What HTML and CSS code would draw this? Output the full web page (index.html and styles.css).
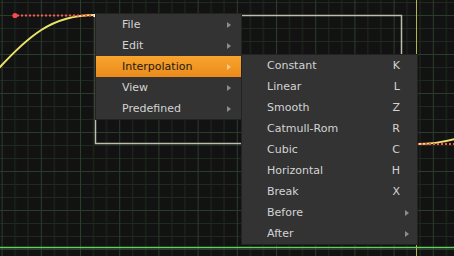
FILE: index.html
```html
<!DOCTYPE html>
<html lang="en">
<head>
    <meta charset="UTF-8">
    <title>Curve Editor</title>
    <link rel="stylesheet" href="styles.css">
</head>
<body>

    <div class="editor">
        <!-- grid, curves, selection box -->
        <svg class="canvas" width="454" height="256" viewBox="0 0 454 256">
            <defs>
                <pattern id="grid" width="39.2" height="39" patternUnits="userSpaceOnUse" patternTransform="translate(1.6 15)">
                    <rect x="13" y="0" width="1" height="39" fill="#1f291f"/>
                    <rect x="26" y="0" width="1" height="39" fill="#1f291f"/>
                    <rect x="0" y="13" width="39.2" height="1" fill="#1f291f"/>
                    <rect x="0" y="26" width="39.2" height="1" fill="#1f291f"/>
                    <rect x="0" y="0" width="1" height="39" fill="#2a3d2a"/>
                    <rect x="0" y="0" width="39.2" height="1" fill="#2a3d2a"/>
                </pattern>
            </defs>
            <rect width="454" height="256" fill="#121212"/>
            <rect width="454" height="256" fill="url(#grid)"/>

            <line x1="0" y1="247.5" x2="454" y2="247.5" stroke="#5fcf5f" stroke-width="1.5"/>
            <line x1="416.5" y1="0" x2="416.5" y2="256" stroke="#b4b44a" stroke-width="1"/>

            <rect x="95.5" y="15.5" width="306" height="128" fill="none" stroke="#bdbdb0" stroke-width="1.5"/>

            <path d="M -20 90 C 30 30, 55 15, 95 15" fill="none" stroke="#ece46a" stroke-width="2"/>
            <line x1="17" y1="15.5" x2="95" y2="15.5" stroke="#ff5252" stroke-width="2" stroke-dasharray="2 2"/>
            <circle cx="15" cy="15.5" r="2.6" fill="#ff4848"/>
            <rect x="93.5" y="14" width="3" height="3" fill="#ffffff"/>

            <path d="M 417 144 C 430 144, 445 142, 460 137.5" fill="none" stroke="#ece46a" stroke-width="2"/>
            <line x1="417" y1="144" x2="454" y2="144" stroke="#ff5252" stroke-width="2" stroke-dasharray="2 2"/>
        </svg>

        <!-- context menu -->
        <div class="menu main-menu">
            <div class="item"><span class="label">File</span><span class="arrow"></span></div>
            <div class="item"><span class="label">Edit</span><span class="arrow"></span></div>
            <div class="item active"><span class="label">Interpolation</span><span class="arrow"></span></div>
            <div class="item"><span class="label">View</span><span class="arrow"></span></div>
            <div class="item"><span class="label">Predefined</span><span class="arrow"></span></div>
        </div>

        <div class="menu sub-menu">
            <div class="item"><span class="label">Constant</span><span class="key">K</span></div>
            <div class="item"><span class="label">Linear</span><span class="key">L</span></div>
            <div class="item"><span class="label">Smooth</span><span class="key">Z</span></div>
            <div class="item"><span class="label">Catmull-Rom</span><span class="key">R</span></div>
            <div class="item"><span class="label">Cubic</span><span class="key">C</span></div>
            <div class="item"><span class="label">Horizontal</span><span class="key">H</span></div>
            <div class="item"><span class="label">Break</span><span class="key">X</span></div>
            <div class="item"><span class="label">Before</span><span class="arrow"></span></div>
            <div class="item"><span class="label">After</span><span class="arrow"></span></div>
        </div>
    </div>

</body>
</html>
```

FILE: styles.css
```css
body {
    margin: 0;
    background-color: #121212;
    font-family: 'DejaVu Sans', Verdana, sans-serif;
    font-size: 11px;
    overflow: hidden;
}
.editor {
    position: relative;
    width: 454px;
    height: 256px;
}
.canvas {
    display: block;
}
.menu {
    position: absolute;
    box-sizing: border-box;
    background-color: #333333;
    border: 1px solid #232323;
    display: flex;
    flex-direction: column;
}
.main-menu {
    left: 95px;
    top: 13px;
    width: 147px;
}
.sub-menu {
    left: 241px;
    top: 54px;
    width: 177px;
}
.item {
    display: flex;
    align-items: center;
    height: 21px;
    color: #d4d4d4;
}
.main-menu .item {
    padding: 0 10px 0 26px;
}
.sub-menu .item {
    padding: 0 8px 0 25px;
}
.label {
    flex: 1;
}
.key {
    margin-right: 9px;
}
.arrow {
    width: 0;
    height: 0;
    border-left: 4px solid #8c8c8c;
    border-top: 3.5px solid transparent;
    border-bottom: 3.5px solid transparent;
}
.item.active {
    background: linear-gradient(#f8a42e, #ea8b1b);
    color: #1e1a14;
}
.item.active .arrow {
    border-left-color: #f6c98c;
}
```
